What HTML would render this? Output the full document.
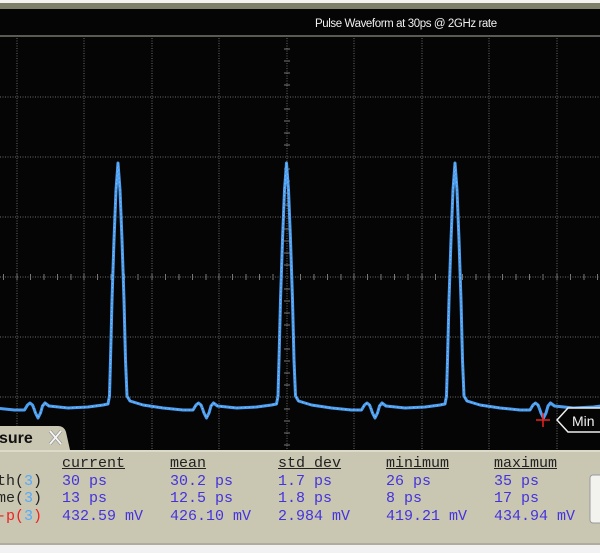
<!DOCTYPE html>
<html><head><meta charset="utf-8">
<style>
html,body{margin:0;padding:0;background:#f2f2f2;}
#c{position:relative;width:600px;height:553px;overflow:hidden;background:#f2f2f2;}
.m{position:absolute;font-family:"Liberation Mono",monospace;font-size:15px;line-height:15px;color:#4433dd;white-space:pre;}
.h{color:#222;text-decoration:underline;}
.l{color:#222;}
.b{color:#55aaff;}
.r{color:#ee2222;}
</style></head><body>
<div id="c">
<svg width="600" height="553" style="position:absolute;left:0;top:0">
  <rect x="0" y="0" width="600" height="3" fill="#f4f4f0"/>
  <rect x="0" y="3" width="600" height="6" fill="#7f806a"/>
  <rect x="0" y="9" width="600" height="445" fill="#050505"/>
  <rect x="0" y="35" width="600" height="2" fill="#5a5a55"/>
  <text x="315" y="27" fill="#f0f0f0" font-family="Liberation Sans, sans-serif" font-size="11.5" letter-spacing="-0.4">Pulse Waveform at 30ps @ 2GHz  rate</text>
  <g stroke="#6a6a6a" stroke-width="1" stroke-dasharray="1,1.5">
    <line x1="17" y1="38" x2="17" y2="452"/><line x1="84" y1="38" x2="84" y2="452"/>
    <line x1="152" y1="38" x2="152" y2="452"/><line x1="219" y1="38" x2="219" y2="452"/>
    <line x1="287" y1="38" x2="287" y2="452"/><line x1="354" y1="38" x2="354" y2="452"/>
    <line x1="422" y1="38" x2="422" y2="452"/><line x1="489" y1="38" x2="489" y2="452"/>
    <line x1="557" y1="38" x2="557" y2="452"/>
    <line x1="0" y1="97" x2="600" y2="97"/><line x1="0" y1="157" x2="600" y2="157"/>
    <line x1="0" y1="217" x2="600" y2="217"/><line x1="0" y1="277" x2="600" y2="277"/>
    <line x1="0" y1="337" x2="600" y2="337"/><line x1="0" y1="397" x2="600" y2="397"/>
  </g>
  <g stroke="#777" stroke-width="1">
    <path d="M3.5 274v6M17 274v6M30.5 274v6M44 274v6M57.5 274v6M71 274v6M84 274v6M97.5 274v6M111 274v6M124.5 274v6M138 274v6M152 274v6M165.5 274v6M179 274v6M192.5 274v6M206 274v6M219 274v6M232.5 274v6M246 274v6M259.5 274v6M273 274v6M300.5 274v6M314 274v6M327.5 274v6M341 274v6M354 274v6M367.5 274v6M381 274v6M394.5 274v6M408 274v6M422 274v6M435.5 274v6M449 274v6M462.5 274v6M476 274v6M489 274v6M502.5 274v6M516 274v6M529.5 274v6M543 274v6M557 274v6M570.5 274v6M584 274v6M597.5 274v6"/>
    <path d="M284 49h6M284 61h6M284 73h6M284 85h6M284 109h6M284 121h6M284 133h6M284 145h6M284 169h6M284 181h6M284 193h6M284 205h6M284 229h6M284 241h6M284 253h6M284 265h6M284 289h6M284 301h6M284 313h6M284 325h6M284 349h6M284 361h6M284 373h6M284 385h6M284 409h6M284 421h6M284 433h6M284 445h6"/>
  </g>
  <defs>
    <path id="w" d="M-84.25 408 L-82.5 413 L-80 418 L-77.5 413 L-75.5 406 L-73 403 L-69 406 L-50 408 L-30 407 L-15 405 L-10 404 L-8.5 396 L-7.5 360 L-6 300 L-4 240 L-2 190 L0 163 L2 190 L4 240 L6 300 L7.5 360 L9 396 L12 401 L25 405 L45 408 L65 410 L75 410 L78 405 L80.5 403 L83 405 L84.25 408"/>
  </defs>
  <g fill="none" stroke="#4e9ff0" stroke-width="3" stroke-linejoin="round">
    <use href="#w" x="-50.5"/><use href="#w" x="118"/><use href="#w" x="286.5"/><use href="#w" x="455"/><use href="#w" x="623.5"/>
  </g>
  <g fill="none" stroke="#9ccfff" stroke-width="0.8" stroke-dasharray="1,3">
    <use href="#w" x="118"/><use href="#w" x="286.5"/><use href="#w" x="455"/>
  </g>
  <path d="M536 420h14M543 413v14" stroke="#ee2222" stroke-width="1.5"/>
  <path d="M557 420 L568 408 L602 408 L602 432 L568 432 Z" fill="#050505" stroke="#eeeeee" stroke-width="1.5"/>
  <text x="572" y="426" fill="#f0f0f0" font-family="Liberation Sans, sans-serif" font-size="14">Min</text>
  <path d="M0 426 L58 426 Q64 426 66 432 L70 450 L600 450 L600 543 L0 543 Z" fill="#c9c6b2"/>
  <rect x="0" y="450" width="600" height="2" fill="#dcdac8"/>
  <rect x="0" y="543" width="600" height="2" fill="#b0ad9c"/>
  <text x="-1" y="443" fill="#111" font-family="Liberation Sans, sans-serif" font-size="16" font-weight="bold">sure</text>
  <path d="M50 431 L61 444 M61 431 L50 444" stroke="#888" stroke-width="3.2"/>
  <path d="M50 431 L61 444 M61 431 L50 444" stroke="#f4f4f4" stroke-width="2"/>
  <rect x="590" y="475" width="14" height="48" rx="3" fill="#f2f2ee" stroke="#999"/>
</svg>
<div class="m h" style="left:62px;top:456px">current</div>
<div class="m h" style="left:170px;top:456px">mean</div>
<div class="m h" style="left:278px;top:456px">std dev</div>
<div class="m h" style="left:386px;top:456px">minimum</div>
<div class="m h" style="left:494px;top:456px">maximum</div>
<div class="m" style="left:-3px;top:474px"><span class="l">th(</span><span class="b">3</span><span class="l">)</span></div>
<div class="m" style="left:-3px;top:491px"><span class="l">me(</span><span class="b">3</span><span class="l">)</span></div>
<div class="m" style="left:-3px;top:509px"><span class="r">-p(</span><span class="b">3</span><span class="r">)</span></div>
<div class="m" style="left:62px;top:474px">30 ps</div>
<div class="m" style="left:62px;top:491px">13 ps</div>
<div class="m" style="left:62px;top:509px">432.59 mV</div>
<div class="m" style="left:170px;top:474px">30.2 ps</div>
<div class="m" style="left:170px;top:491px">12.5 ps</div>
<div class="m" style="left:170px;top:509px">426.10 mV</div>
<div class="m" style="left:278px;top:474px">1.7 ps</div>
<div class="m" style="left:278px;top:491px">1.8 ps</div>
<div class="m" style="left:278px;top:509px">2.984 mV</div>
<div class="m" style="left:386px;top:474px">26 ps</div>
<div class="m" style="left:386px;top:491px">8 ps</div>
<div class="m" style="left:386px;top:509px">419.21 mV</div>
<div class="m" style="left:494px;top:474px">35 ps</div>
<div class="m" style="left:494px;top:491px">17 ps</div>
<div class="m" style="left:494px;top:509px">434.94 mV</div>
</div>
</body></html>
